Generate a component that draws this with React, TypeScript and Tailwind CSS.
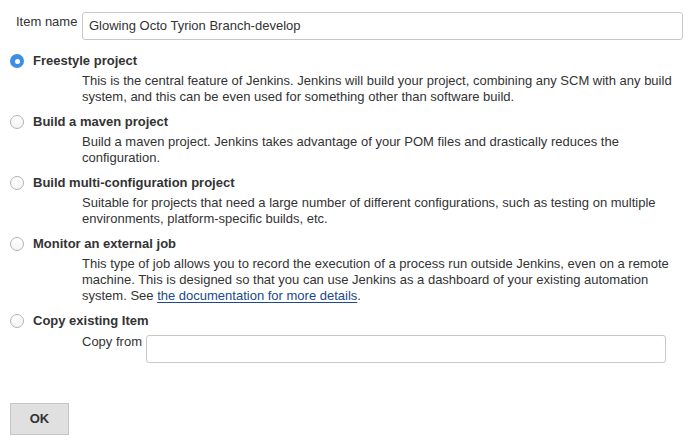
import React from 'react';

type JobType = {
  name: string;
  lines: React.ReactNode[];
  checked?: boolean;
};

const Radio = ({ checked }: { checked?: boolean }) =>
  checked ? (
    <div className="w-[14px] h-[14px] rounded-full bg-[#3d8fe6] flex items-center justify-center shrink-0">
      <div className="w-[5px] h-[5px] rounded-full bg-white" />
    </div>
  ) : (
    <div className="w-[14px] h-[14px] rounded-full border border-[#b3b3b3] bg-gradient-to-b from-white to-[#f4f4f4] shrink-0" />
  );

const App = () => {
  const jobs: JobType[] = [
    {
      name: 'Freestyle project',
      checked: true,
      lines: [
        'This is the central feature of Jenkins. Jenkins will build your project, combining any SCM with any build',
        'system, and this can be even used for something other than software build.',
      ],
    },
    {
      name: 'Build a maven project',
      lines: [
        'Build a maven project. Jenkins takes advantage of your POM files and drastically reduces the',
        'configuration.',
      ],
    },
    {
      name: 'Build multi-configuration project',
      lines: [
        'Suitable for projects that need a large number of different configurations, such as testing on multiple',
        'environments, platform-specific builds, etc.',
      ],
    },
    {
      name: 'Monitor an external job',
      lines: [
        'This type of job allows you to record the execution of a process run outside Jenkins, even on a remote',
        'machine. This is designed so that you can use Jenkins as a dashboard of your existing automation',
        <>
          system. See{' '}
          <a href="#" className="text-[#204a87] underline underline-offset-2">
            the documentation for more details
          </a>
          .
        </>,
      ],
    },
  ];

  return (
    <div className="w-[692px] h-[443px] bg-white text-[#333] text-[13px] font-['Liberation_Sans',Arial,sans-serif] pt-[12px] pl-[10px]">
      <div className="flex items-start">
        <label className="w-[72px] pl-[6px] leading-4 mt-[2px]">Item name</label>
        <div className="w-[601px] h-[28px] border border-[#c8c8c8] rounded-[3px] flex items-center px-[6px]">
          Glowing Octo Tyrion Branch-develop
        </div>
      </div>

      <div className="mt-[11px]">
        {jobs.map((job, i) => (
          <div key={i} className="mb-[7px]">
            <div className="h-[20px] flex items-center gap-[9px]">
              <Radio checked={job.checked} />
              <span className="font-bold">{job.name}</span>
            </div>
            <div className="ml-[72px] mt-[2px] leading-4">
              {job.lines.map((line, j) => (
                <div key={j}>{line}</div>
              ))}
            </div>
          </div>
        ))}

        <div>
          <div className="h-[20px] flex items-center gap-[9px]">
            <Radio />
            <span className="font-bold">Copy existing Item</span>
          </div>
          <div className="ml-[72px] mt-[4px] flex items-start gap-[4px]">
            <span className="leading-4 mt-[-1px]">Copy from</span>
            <div className="w-[520px] h-[28px] border border-[#c8c8c8] rounded-[3px]" />
          </div>
        </div>
      </div>

      <button className="mt-[40px] w-[59px] h-[32px] bg-[#e0e0e0] border border-[#c6c6c6] font-bold text-[#333] flex items-center justify-center">
        OK
      </button>
    </div>
  );
};

export default App;
